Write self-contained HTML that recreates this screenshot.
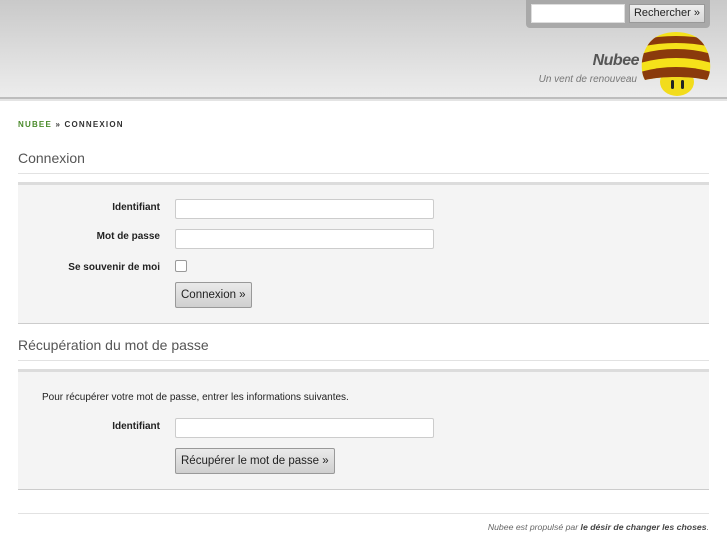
<!DOCTYPE html>
<html><head><meta charset="utf-8"><style>
*{margin:0;padding:0;box-sizing:border-box}
body{width:727px;height:545px;overflow:hidden;background:#fff;font-family:"Liberation Sans",sans-serif;color:#333;position:relative}
.hdr{position:absolute;left:0;top:0;width:727px;height:99px;background:linear-gradient(#c9c9c9,#e6e6e6 80%,#ececec);border-bottom:2px solid #bdbdbd}
.hdr:after{content:"";position:absolute;left:0;right:0;bottom:-4px;height:2px;background:#e4e4e4}
.sb{position:absolute;left:526px;top:0;width:184px;height:28px;background:#a9a9a9;border-radius:0 0 4px 4px}
.sb .in{position:absolute;left:5px;top:4px;width:94px;height:19px;background:#fff;border:1px solid #ddd}
.sb .bt{position:absolute;left:103px;top:4px;width:76px;height:19px;background:linear-gradient(#eee,#d6d6d6);border:1px solid #999;font-size:11px;line-height:17px;text-align:center;color:#222}
.t1{position:absolute;right:88px;top:52px;font-size:16px;font-weight:bold;font-style:italic;color:#555;letter-spacing:-0.5px}
.t2{position:absolute;right:90px;top:74px;font-size:10px;font-style:italic;color:#777}
.abs{position:absolute}
.bc{left:18px;top:120px;font-size:8px;font-weight:bold;letter-spacing:1.2px;color:#333}
.bc b{color:#4a8a2a}
h2{position:absolute;left:18px;font-size:14px;font-weight:normal;color:#555}
.line{position:absolute;left:18px;width:691px;height:1px;background:#e2e2e2}
.box{position:absolute;left:18px;width:691px;background:#f4f4f4;border-top:3px solid #dcdcdc;border-bottom:1px solid #ccc}
.lab{position:absolute;font-size:10px;font-weight:bold;color:#222;text-align:right;width:160px;left:0}
.inp{position:absolute;left:175px;width:259px;height:20px;background:#fff;border:1px solid #ccc;border-radius:2px}
.btn{position:absolute;left:175px;height:26px;border:1px solid #999;border-radius:2px;background:linear-gradient(#eaeaea,#cfcfcf);font-size:11.5px;color:#222;line-height:24px;padding:0 5px}
</style></head><body>
<div class="hdr">
 <div class="sb"><div class="in"></div><div class="bt">Rechercher »</div></div>
 <div class="t1">Nubee</div>
 <div class="t2">Un vent de renouveau</div>
 <svg class="abs" style="left:640px;top:30px" width="72" height="68" viewBox="0 0 72 68">
  <defs><clipPath id="c"><path d="M5 50 C-2 38 2 12 20 5 C30 1 42 1 52 5 C70 12 74 38 67 50 C50 46 22 46 5 50 Z"/></clipPath></defs>
  <ellipse cx="37" cy="52" rx="17" ry="14" fill="#f2dc1c"/>
  <g clip-path="url(#c)">
   <rect x="0" y="0" width="72" height="55" fill="#f5e21a"/>
   <path d="M0 10 Q36 2 72 10 V17 Q36 9 0 17Z" fill="#8a3a0c"/>
   <path d="M0 24 Q36 14 72 24 V33 Q36 23 0 33Z" fill="#8a3a0c"/>
   <path d="M0 42 Q36 32 72 42 V55 H0Z" fill="#8a3a0c"/>
  </g>
  <rect x="31" y="50" width="3" height="9" rx="1.5" fill="#222"/>
  <rect x="41" y="50" width="3" height="9" rx="1.5" fill="#222"/>
 </svg>
</div>
<div class="abs bc"><b>NUBEE</b> » CONNEXION</div>
<h2 style="top:150px">Connexion</h2>
<div class="line" style="top:173px"></div>
<div class="box" style="top:182px;height:142px">
 <div class="lab" style="top:17px;left:-18px">Identifiant</div>
 <div class="inp" style="top:14px;left:157px"></div>
 <div class="lab" style="top:46px;left:-18px">Mot de passe</div>
 <div class="inp" style="top:44px;left:157px"></div>
 <div class="lab" style="top:77px;left:-18px">Se souvenir de moi</div>
 <div class="abs" style="left:157px;top:75px;width:12px;height:12px;border:1px solid #999;background:#fff;border-radius:2px"></div>
 <div class="btn" style="top:97px;left:157px">Connexion »</div>
</div>
<h2 style="top:337px">Récupération du mot de passe</h2>
<div class="line" style="top:360px"></div>
<div class="box" style="top:369px;height:121px">
 <div class="abs" style="left:24px;top:20px;font-size:10px;color:#222">Pour récupérer votre mot de passe, entrer les informations suivantes.</div>
 <div class="lab" style="top:49px;left:-18px">Identifiant</div>
 <div class="inp" style="top:46px;left:157px"></div>
 <div class="btn" style="top:76px;left:157px">Récupérer le mot de passe »</div>
</div>
<div class="line" style="top:513px"></div>
<div class="abs" style="right:18px;top:522px;font-size:8.7px;font-style:italic;color:#666">Nubee est propulsé par <b style="color:#444">le désir de changer les choses</b>.</div>
</body></html>
